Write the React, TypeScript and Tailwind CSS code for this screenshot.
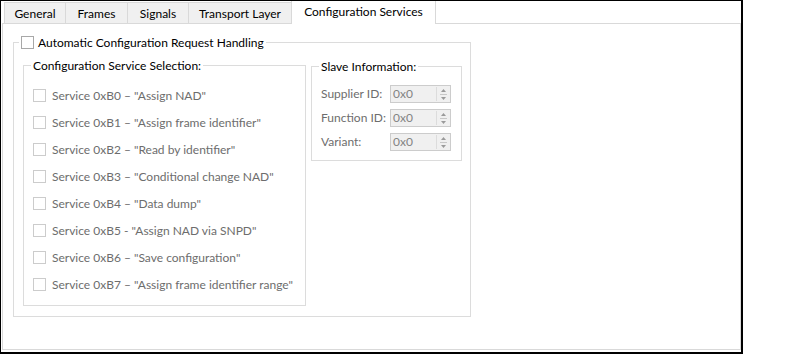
import React from 'react';

const tabs = ['General', 'Frames', 'Signals', 'Transport Layer'];
const tabWidths = ['w-[61px]', 'w-[62px]', 'w-[61px]', 'w-[103px]'];

const services = [
  'Service 0xB0 \u2013 "Assign NAD"',
  'Service 0xB1 \u2013 "Assign frame identifier"',
  'Service 0xB2 \u2013 "Read by identifier"',
  'Service 0xB3 \u2013 "Conditional change NAD"',
  'Service 0xB4 \u2013 "Data dump"',
  'Service 0xB5 - "Assign NAD via SNPD"',
  'Service 0xB6 \u2013 "Save configuration"',
  'Service 0xB7 \u2013 "Assign frame identifier range"',
];

const slaveFields = ['Supplier ID:', 'Function ID:', 'Variant:'];

const CheckBox: React.FC<{ disabled?: boolean }> = ({ disabled }) => (
  <span
    className={`block w-[13px] h-[13px] shrink-0 border bg-white ${
      disabled ? 'border-[#cccccc]' : 'border-[#a8a8a8]'
    }`}
  />
);

const SpinBox: React.FC = () => (
  <div className="flex w-[61px] h-[18px] border border-[#cccccc] bg-[#f0f0f0]">
    <span className="flex-1 pl-[2px] leading-[16px] text-[#838383]">0x0</span>
    <div className="flex flex-col w-[13px] items-center justify-center gap-[2px] my-[1px] mr-[1px] border-l border-[#dcdcdc]">
      <svg width="5" height="3" viewBox="0 0 5 3">
        <path d="M2.5 0 L5 3 L0 3 Z" fill="#9a9a9a" />
      </svg>
      <span className="block w-[7px] h-px bg-[#c8c8c8]" />
      <svg width="5" height="3" viewBox="0 0 5 3">
        <path d="M0 0 L5 0 L2.5 3 Z" fill="#9a9a9a" />
      </svg>
    </div>
  </div>
);

export default function App() {
  return (
    <div
      className="w-[800px] h-[354px] bg-white text-[12px] text-black"
      style={{ fontFamily: 'Lato, "Liberation Sans", sans-serif' }}
    >
      <div className="w-[743px] h-[354px] border-l border-t border-r-2 border-b-2 border-black flex flex-col">
        {/* Tab strip */}
        <div className="flex items-end h-[22px] pl-[3px]">
          {tabs.map((t, i) => (
            <div
              key={t}
              className={`${tabWidths[i]} h-[21px] flex items-center justify-center pt-px bg-[#f0f0f0] border-t border-l border-[#d9d9d9]`}
            >
              {t}
            </div>
          ))}
          <div className="relative z-10 w-[145px] h-[23px] -mb-px flex items-center justify-center pb-px bg-white border-l border-r border-[#d9d9d9]">
            Configuration Services
          </div>
        </div>

        {/* Tab page */}
        <div className="ml-px w-[739px] h-[327px] border border-[#d9d9d9] bg-white">
          {/* Automatic Configuration Request Handling */}
          <div className="relative ml-[10px] mt-[18px] w-[458px] h-[275px] border border-[#dcdcdc]">
            <div className="absolute left-[5px] top-[-8px] flex items-center gap-[4px] bg-white px-[2px] h-[15px]">
              <CheckBox />
              <span>Automatic Configuration Request Handling</span>
            </div>

            <div className="flex gap-[5px] ml-[9px] mt-[22px]">
              {/* Configuration Service Selection */}
              <div className="relative w-[283px] h-[241px] border border-[#dcdcdc]">
                <div className="absolute left-[7px] top-[-8px] bg-white px-[2px] h-[15px] leading-[15px]">
                  Configuration Service Selection:
                </div>
                <div className="flex flex-col pt-[16px] pl-[9px]">
                  {services.map((s) => (
                    <div key={s} className="flex items-center gap-[6px] h-[27px] text-[#6d6d6d]">
                      <CheckBox disabled />
                      <span>{s}</span>
                    </div>
                  ))}
                </div>
              </div>

              {/* Slave Information */}
              <div className="relative mt-px w-[151px] h-[95px] border border-[#dcdcdc]">
                <div className="absolute left-[7px] top-[-8px] bg-white px-[2px] h-[15px] leading-[15px]">
                  Slave Information:
                </div>
                <div className="flex flex-col pt-[15px] pl-[9px]">
                  {slaveFields.map((f) => (
                    <div key={f} className="flex items-center h-[24px]">
                      <span className="w-[69px] text-[#6d6d6d]">{f}</span>
                      <SpinBox />
                    </div>
                  ))}
                </div>
              </div>
            </div>
          </div>
        </div>
      </div>
    </div>
  );
}
